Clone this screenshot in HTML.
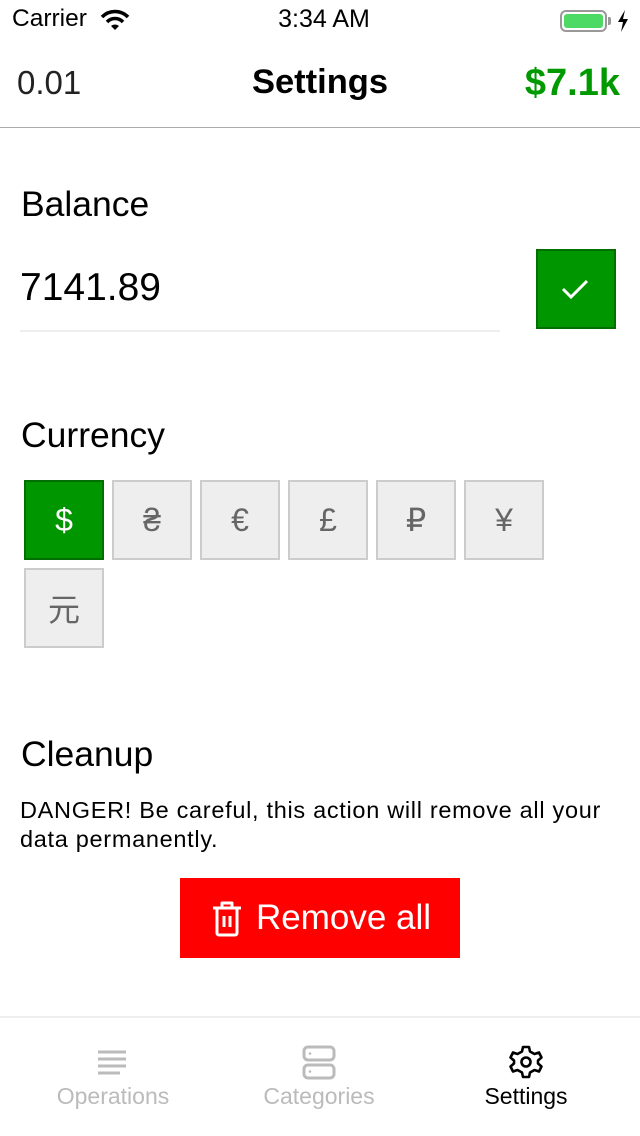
<!DOCTYPE html>
<html><head><meta charset="utf-8">
<style>
*{margin:0;padding:0;box-sizing:border-box}
body{width:640px;height:1136px;background:#fff;font-family:"Liberation Sans","Noto Sans CJK SC",sans-serif;position:relative;overflow:hidden;color:#000}
.a{position:absolute;white-space:nowrap}
.cb{position:absolute;width:80px;height:80px;background:#eee;border:2px solid #ccc;color:#666;font-size:32px;display:flex;align-items:center;justify-content:center}
.tab{position:absolute;font-size:23px;color:#bbb;text-align:center;width:200px}
.h{position:absolute;font-size:35.5px;left:21px}
</style></head><body>
<div class="a" style="left:12px;top:5px;font-size:24.5px">Carrier</div>
<svg class="a" style="left:100px;top:9px" width="30" height="22" viewBox="0 0 30 22"><path d="M2 8 A18 18 0 0 1 28 8" stroke="#000" stroke-width="3.5" fill="none"/><path d="M7 13 A11 11 0 0 1 23 13" stroke="#000" stroke-width="3.5" fill="none"/><path d="M11 17 L15 21 L19 17 A6 6 0 0 0 11 17Z" fill="#000"/></svg>
<div class="a" style="left:0;width:648px;text-align:center;top:5px;font-size:25px">3:34 AM</div>
<div class="a" style="left:560px;top:10px;width:47px;height:22px;border:2px solid #999;border-radius:6px;padding:2px"><div style="width:100%;height:100%;background:#4cd964;border-radius:3px"></div></div>
<div class="a" style="left:608px;top:17px;width:3px;height:8px;background:#999;border-radius:0 2px 2px 0"></div>
<svg class="a" style="left:617px;top:10px" width="12" height="22" viewBox="0 0 12 22"><path d="M8 0 L1 12 H6 L4 22 L11 9 H6 Z" fill="#000"/></svg>

<div class="a" style="left:17px;top:64px;font-size:33px;color:#222">0.01</div>
<div class="a" style="left:0;width:640px;text-align:center;top:63px;font-size:34.5px;font-weight:bold">Settings</div>
<div class="a" style="right:20px;top:62px;font-size:38px;font-weight:bold;color:#009900">$7.1k</div>
<div class="a" style="left:0;top:127px;width:640px;height:1px;background:#aaa"></div>

<div class="h" style="top:184px">Balance</div>
<div class="a" style="left:20px;top:266px;font-size:39px">7141.89</div>
<div class="a" style="left:20px;top:330px;width:480px;height:2px;background:#eee"></div>
<div class="a" style="left:536px;top:249px;width:80px;height:80px;background:#009600;border:2px solid #006e00"></div>
<svg class="a" style="left:560px;top:275px" width="32" height="28" viewBox="0 0 32 28"><path d="M3 14 L11 22 L27 6" stroke="#fff" stroke-width="3" fill="none"/></svg>

<div class="h" style="top:415px">Currency</div>
<div class="cb" style="left:24px;top:480px;background:#009600;border-color:#006e00;color:#fff">$</div>
<div class="cb" style="left:112px;top:480px">₴</div>
<div class="cb" style="left:200px;top:480px">€</div>
<div class="cb" style="left:288px;top:480px">£</div>
<div class="cb" style="left:376px;top:480px">₽</div>
<div class="cb" style="left:464px;top:480px">¥</div>
<div class="cb" style="left:24px;top:568px;font-family:'Noto Sans CJK SC',sans-serif">元</div>

<div class="h" style="top:734px">Cleanup</div>
<div class="a" style="left:20px;top:796px;font-size:23.5px;letter-spacing:0.7px;line-height:29px;white-space:normal;width:600px">DANGER! Be careful, this action will remove all your data permanently.</div>
<div class="a" style="left:180px;top:878px;width:280px;height:80px;background:#ff0000"></div>
<svg class="a" style="left:210px;top:900px" width="34" height="38" viewBox="0 0 34 38"><path d="M3 8 H31 M12 8 V3 H22 V8 M7 8 V33 A2 2 0 0 0 9 35 H25 A2 2 0 0 0 27 33 V8 M14 16 V27 M20 16 V27" stroke="#fff" stroke-width="3" fill="none" stroke-linejoin="round"/></svg>
<div class="a" style="left:256px;top:898px;font-size:35px;color:#fff">Remove all</div>

<div class="a" style="left:0;top:1016px;width:640px;height:2px;background:#eee"></div>
<svg class="a" style="left:96px;top:1049px" width="32" height="26" viewBox="0 0 32 26"><path d="M2 3 H30 M2 10 H30 M2 17 H30 M2 24 H24" stroke="#bbb" stroke-width="3" fill="none"/></svg>
<svg class="a" style="left:302px;top:1045px" width="34" height="36" viewBox="0 0 34 36"><rect x="2" y="2" width="30" height="13" rx="4" stroke="#bbb" stroke-width="3" fill="none"/><rect x="2" y="20" width="30" height="13" rx="4" stroke="#bbb" stroke-width="3" fill="none"/><circle cx="8" cy="8.5" r="1.3" fill="#bbb"/><circle cx="8" cy="26.5" r="1.3" fill="#bbb"/></svg>
<svg class="a" style="left:508px;top:1044px" width="36" height="36" viewBox="0 0 36 36"><g transform="translate(18 18)" fill="none" stroke="#000" stroke-width="2.6" stroke-linejoin="round"><path d="M-3 -15 L3 -15 L4 -10.5 L8.5 -8 L13 -9.5 L15.5 -4.5 L12 -1.5 V1.5 L15.5 4.5 L13 9.5 L8.5 8 L4 10.5 L3 15 L-3 15 L-4 10.5 L-8.5 8 L-13 9.5 L-15.5 4.5 L-12 1.5 V-1.5 L-15.5 -4.5 L-13 -9.5 L-8.5 -8 L-4 -10.5 Z"/><circle r="4.5"/></g></svg>
<div class="tab" style="left:13px;top:1083px">Operations</div>
<div class="tab" style="left:219px;top:1083px">Categories</div>
<div class="tab" style="left:426px;top:1083px;color:#000">Settings</div>
</body></html>
